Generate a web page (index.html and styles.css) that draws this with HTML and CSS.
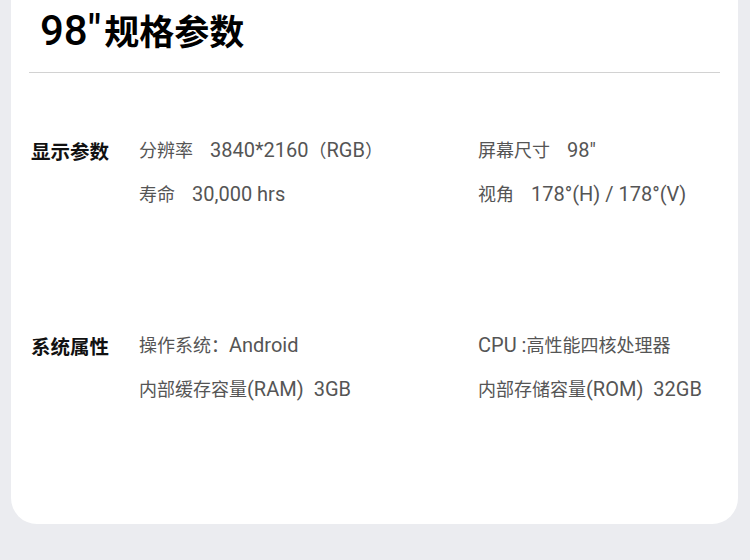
FILE: index.html
```html
<!DOCTYPE html>
<html lang="zh-CN">
<head>
    <meta charset="UTF-8">
    <meta name="viewport" content="width=device-width, initial-scale=1.0">
    <title>98"规格参数</title>
    <link rel="stylesheet" href="styles.css">
</head>
<body>
    <div class="card">
        <div class="card-head">
            <h1><span class="title-num">98"</span>规格参数</h1>
        </div>

        <!-- 显示参数 -->
        <div class="spec spec-first">
            <div class="spec-label">显示参数</div>
            <div class="spec-item"><span class="cn key">分辨率</span>3840*2160<span class="cn">（</span>RGB<span class="cn">）</span></div>
            <div class="spec-item"><span class="cn key">屏幕尺寸</span>98″</div>
            <div></div>
            <div class="spec-item"><span class="cn key">寿命</span>30,000 hrs</div>
            <div class="spec-item"><span class="cn key">视角</span>178°(H) / 178°(V)</div>
        </div>

        <!-- 系统属性 -->
        <div class="spec">
            <div class="spec-label">系统属性</div>
            <div class="spec-item"><span class="cn">操作系统：</span>Android</div>
            <div class="spec-item">CPU :<span class="cn">高性能四核处理器</span></div>
            <div></div>
            <div class="spec-item"><span class="cn">内部缓存容量</span><span class="key-tight">(RAM)</span>3GB</div>
            <div class="spec-item"><span class="cn">内部存储容量</span><span class="key-tight">(ROM)</span>32GB</div>
        </div>
    </div>
</body>
</html>
```

FILE: styles.css
```css
body {
    margin: 0;
    background: #ebecf0;
    font-family: Roboto, "Noto Sans CJK SC", sans-serif;
    color: #111;
}

.card {
    background: #fff;
    margin: 0 12px 0 11px;
    padding: 0 18px;
    height: 524px;
    border-radius: 0 0 26px 26px;
    box-sizing: border-box;
}

.card-head {
    height: 73px;
    padding: 0 11px;
    border-bottom: 1px solid #d2d2d2;
    box-sizing: border-box;
    display: flex;
    align-items: center;
}

h1 {
    margin: -12px 0 0;
    font-family: "Noto Sans CJK SC", sans-serif;
    font-size: 35px;
    font-weight: 700;
    line-height: 48px;
    color: #000;
}

.title-num {
    font-family: Roboto, sans-serif;
    font-size: 42px;
    font-weight: 500;
    margin-right: 3px;
}

.spec {
    display: grid;
    grid-template-columns: 108px 339px 1fr;
    grid-auto-rows: 44px;
    padding-left: 2px;
    margin-top: 107px;
}

.spec-first {
    margin-top: 56px;
}

.spec-label {
    font-family: "Noto Sans CJK SC", sans-serif;
    font-size: 19.5px;
    font-weight: 700;
    line-height: 44px;
    color: #111;
}

.spec-item {
    font-size: 20px;
    line-height: 43px;
    color: #555;
    white-space: nowrap;
}

.cn {
    font-family: "Noto Sans CJK SC", sans-serif;
    font-size: 18px;
    line-height: 1;
}

.key {
    margin-right: 17px;
}

.key-tight {
    margin-right: 10px;
}
```
